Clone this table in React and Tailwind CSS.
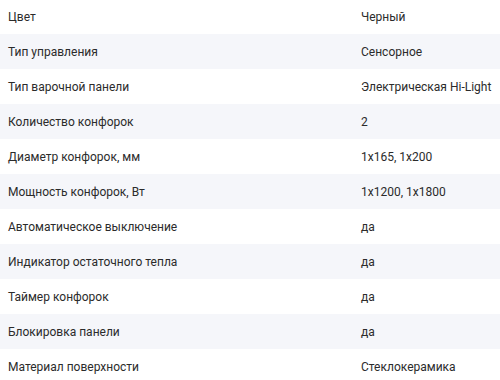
const specs = [
  ['Цвет', 'Черный'],
  ['Тип управления', 'Сенсорное'],
  ['Тип варочной панели', 'Электрическая Hi-Light'],
  ['Количество конфорок', '2'],
  ['Диаметр конфорок, мм', '1x165, 1x200'],
  ['Мощность конфорок, Вт', '1x1200, 1x1800'],
  ['Автоматическое выключение', 'да'],
  ['Индикатор остаточного тепла', 'да'],
  ['Таймер конфорок', 'да'],
  ['Блокировка панели', 'да'],
  ['Материал поверхности', 'Стеклокерамика'],
];

export default function App() {
  return (
    <div className="w-[500px] h-[380px] overflow-hidden bg-white font-['Roboto',sans-serif] text-[12px] text-[#2b2b2b]">
      <div className="-mt-px">
        {specs.map(([name, value], i) => (
          <div
            key={name}
            className={`grid grid-cols-[361px_1fr] items-center h-[35px] ${i % 2 ? 'bg-[#f5f6fa]' : 'bg-white'}`}
          >
            <span className="pl-2 whitespace-nowrap">{name}</span>
            <span className="whitespace-nowrap">{value}</span>
          </div>
        ))}
      </div>
    </div>
  );
}
